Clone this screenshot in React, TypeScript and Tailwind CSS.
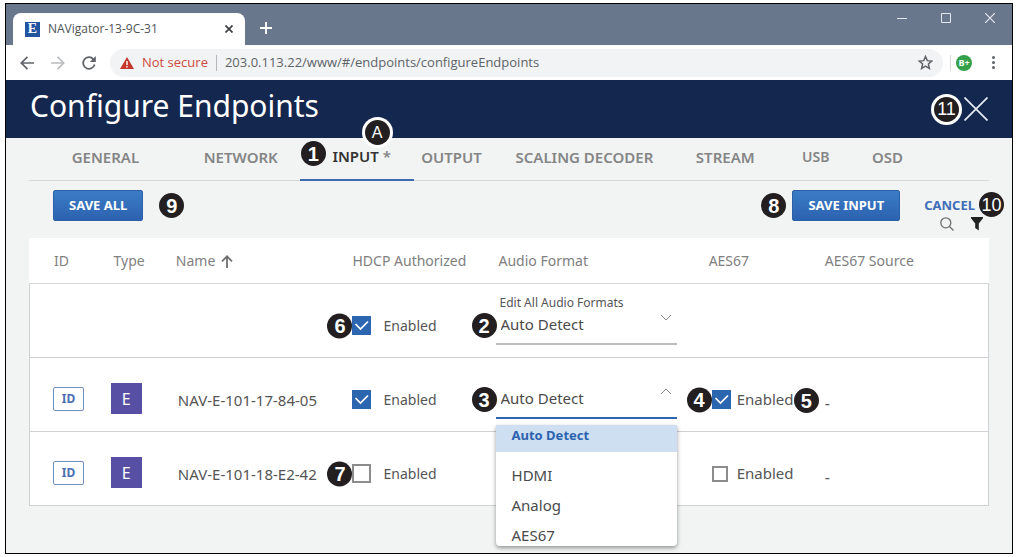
import { useState } from "react";
import type { ReactNode } from "react";
import clsx from "clsx";

const tabs = ["GENERAL", "NETWORK", "INPUT", "OUTPUT", "SCALING DECODER", "STREAM", "USB", "OSD"];

const formats = ["Auto Detect", "HDMI", "Analog", "AES67"];

const endpoints = [
  { name: "NAV-E-101-17-84-05", hdcp: true, aes67: true, open: true, marks: { audio: "3", aes67: "4", source: "5" } },
  { name: "NAV-E-101-18-E2-42", hdcp: false, aes67: false, open: false, marks: { hdcp: "7" } },
] as {
  name: string;
  hdcp: boolean;
  aes67: boolean;
  open: boolean;
  marks: { hdcp?: string; audio?: string; aes67?: string; source?: string };
}[];

// Numbered marker that points at a part of the screen
function Callout({ children, className, size = "text-xl font-bold" }: { children: ReactNode; className?: string; size?: string }) {
  return (
    <span
      className={clsx(
        "z-10 flex size-[25px] shrink-0 items-center justify-center rounded-full bg-[#231f20] font-['Liberation_Sans',sans-serif] leading-none text-white",
        size,
        className,
      )}
    >
      {children}
    </span>
  );
}

function Check({ id, initial, mark, large }: { id: string; initial: boolean; mark?: string; large?: boolean }) {
  const [checked, setChecked] = useState(initial);
  return (
    <div className={clsx("relative flex items-center", large ? "gap-[6px] text-[15px]" : "gap-3 text-sm")}>
      {mark && <Callout className="absolute right-full top-1/2 -translate-y-1/2">{mark}</Callout>}
      <span className="relative flex">
        <input
          id={id}
          type="checkbox"
          checked={checked}
          onChange={() => setChecked(!checked)}
          className={clsx(
            "appearance-none border-2 border-[#8c8c8c] bg-white checked:border-[#2c66b1] checked:bg-[#2c66b1]",
            large && !checked ? "mr-[3px] size-4" : "size-[19px]",
          )}
        />
        {checked && (
          <svg viewBox="0 0 19 19" className="pointer-events-none absolute inset-0 size-[19px]" fill="none" stroke="white" strokeWidth="1.7">
            <path d="M3.500 8l5 5L16 5.500" />
          </svg>
        )}
      </span>
      <label htmlFor={id}>Enabled</label>
    </div>
  );
}

function FormatSelect({ id, caption, mark, open }: { id: string; caption?: string; mark: string; open?: boolean }) {
  const [value, setValue] = useState(formats[0]);
  return (
    <div className="relative w-[181px]">
      {caption && (
        <label htmlFor={id} className="block pl-1 text-xs leading-3 text-[#555]">
          {caption}
        </label>
      )}
      <div className="relative">
        <Callout className="absolute -left-6 top-1">{mark}</Callout>
        <select
          id={id}
          aria-label={caption ? undefined : "Audio Format"}
          value={value}
          onChange={(e) => setValue(e.target.value)}
          className={clsx(
            "block h-9 w-full appearance-none border-b-2 bg-transparent pb-1 pl-[5px] text-[15px] text-[#4a4a4a] outline-none",
            open ? "border-[#2c66b1]" : "border-[#bdbdbd]",
          )}
        >
          {formats.map((f) => (
            <option key={f}>{f}</option>
          ))}
        </select>
        <svg viewBox="0 0 12 7" className="pointer-events-none absolute right-[5px] top-[5px] h-[7px] w-3" fill="none" stroke="#8a8a8a">
          {open ? <path d="M1 6l5-5 5 5" /> : <path d="M1 1l5 5 5-5" />}
        </svg>
      </div>
      {open && (
        <ul
          role="listbox"
          aria-label="Audio Format"
          className="absolute inset-x-0 top-full z-20 mt-[6px] max-h-[121px] overflow-hidden rounded-b bg-white text-[15px] text-[#4a4a4a] shadow-[0_2px_4px_rgba(0,0,0,0.4)]"
        >
          {formats.map((f) => (
            <li
              key={f}
              role="option"
              aria-selected={f === value}
              onClick={() => setValue(f)}
              className={clsx(
                "pl-4",
                f === value ? "mb-2 h-[27px] bg-[#cddff1] text-[13px] font-bold leading-5 text-[#2c62ae]" : "leading-[30px]",
              )}
            >
              {f}
            </li>
          ))}
        </ul>
      )}
    </div>
  );
}

function BrowserBar() {
  return (
    <div className="font-['Open_Sans',sans-serif]">
      <div className="flex h-[41px] items-end bg-[#69778c] pl-[7px]">
        <div className="flex h-8 w-[232px] items-center rounded-t-lg bg-white pl-3 pr-3">
          <span className="flex size-[15px] items-center justify-center bg-[#2354a0] font-['Liberation_Serif',serif] text-sm font-bold leading-none text-white">
            E
          </span>
          <span className="ml-2 flex-1 text-xs text-[#505357]">NAVigator-13-9C-31</span>
          <button aria-label="Close tab">
            <svg viewBox="0 0 8 8" className="size-2" stroke="#3c4043" strokeWidth="1.7">
              <path d="M.5.5l7 7M7.500.5l-7 7" />
            </svg>
          </button>
        </div>
        <button aria-label="New tab" className="mb-[11px] ml-[15px]">
          <svg viewBox="0 0 12 12" className="size-3" stroke="white" strokeWidth="1.8">
            <path d="M6 0v12M0 6h12" />
          </svg>
        </button>
        <div className="ml-auto flex h-[27px] self-start">
          <button aria-label="Minimize" className="flex w-11 items-center justify-center">
            <svg viewBox="0 0 10 10" className="size-[10px]" stroke="#e4e9f0">
              <path d="M0 5.500h10" />
            </svg>
          </button>
          <button aria-label="Maximize" className="flex w-11 items-center justify-center">
            <svg viewBox="0 0 10 10" className="size-[10px]" stroke="#e4e9f0" fill="none">
              <path d="M.5.5h9v9h-9z" />
            </svg>
          </button>
          <button aria-label="Close window" className="flex w-11 items-center justify-center">
            <svg viewBox="0 0 10 10" className="size-[10px]" stroke="#e4e9f0" strokeWidth="1.2">
              <path d="M0 0l10 10M10 0L0 10" />
            </svg>
          </button>
        </div>
      </div>

      <div className="flex h-[35px] items-center bg-white pl-[14px] pr-[17px]">
        <button aria-label="Back">
          <svg viewBox="0 0 14 14" className="size-[14px]" fill="none" stroke="#5f6368" strokeWidth="1.7">
            <path d="M7.500.8L1.300 7l6.200 6.200M1.300 7H14" />
          </svg>
        </button>
        <button aria-label="Forward" className="ml-[17px]">
          <svg viewBox="0 0 14 14" className="size-[14px]" fill="none" stroke="#babcbe" strokeWidth="1.700">
            <path d="M6.500.8L12.700 7l-6.200 6.200M12.700 7H0" />
          </svg>
        </button>
        <button aria-label="Reload" className="ml-[17px]">
          <svg viewBox="0 0 14 14" className="size-[14px]" fill="none" stroke="#5f6368" strokeWidth="1.800">
            <path d="M12.600 8.500A5.800 5.800 0 1 1 11.300 3.100L12.500 4.300" />
            <path d="M13.800 0v6H7.800z" fill="#5f6368" stroke="none" />
          </svg>
        </button>
        <div className="ml-[14px] flex h-7 flex-1 items-center rounded-full bg-[#f1f3f4] pl-[10px] pr-[10px] text-[13px]">
          <svg viewBox="0 0 14 12" className="h-3 w-[14px]">
            <path d="M7 0l7 12H0z" fill="#c5362c" />
            <path d="M7 4v4M7 9v1.500" stroke="white" strokeWidth="1.400" />
          </svg>
          <span className="ml-2 text-[#cf4b41]">Not secure</span>
          <span className="mx-2 h-4 w-px bg-[#b4b7ba]" />
          <input
            aria-label="Address"
            defaultValue="203.0.113.22/www/#/endpoints/configureEndpoints"
            className="min-w-0 flex-1 bg-transparent text-[#5f6368] outline-none"
          />
          <button aria-label="Bookmark this page">
            <svg viewBox="0 0 24 24" className="size-[15px]" fill="none" stroke="#5f6368" strokeWidth="2.400">
              <path d="M12 2.500l2.900 6.500 7.100.7-5.400 4.700 1.600 7-6.200-3.700-6.200 3.700 1.600-7L2 9.700l7.100-.7z" />
            </svg>
          </button>
        </div>
        <span className="ml-[7px] h-4 w-px bg-[#d5d8db]" />
        <button className="ml-[5px] flex size-4 items-center justify-center rounded-full bg-[#35a04a] text-[9px] font-bold leading-none text-white">
          B+
        </button>
        <button aria-label="Menu" className="ml-5">
          <svg viewBox="0 0 3 13" className="h-[13px] w-[3px]" fill="#5f6368">
            <circle cx="1.500" cy="1.500" r="1.500" />
            <circle cx="1.500" cy="6.500" r="1.500" />
            <circle cx="1.500" cy="11.500" r="1.500" />
          </svg>
        </button>
      </div>
    </div>
  );
}

function Tabs() {
  return (
    <nav className="mx-[23px] grid h-[43px] grid-cols-[153fr_118fr_114fr_76fr_190fr_92fr_89fr_55fr_74fr] border-b border-[#d5d9db] text-[15px] font-semibold text-[#858585]">
      {tabs.map((tab) =>
        tab === "INPUT" ? (
          <button key={tab} className="relative -mb-px whitespace-nowrap border-b-2 border-[#3c6bb0] pb-1 pl-[10px]">
            <Callout className="absolute left-px top-[3px]">1</Callout>
            <Callout size="text-base font-medium" className="absolute -top-[18px] left-[65px] ring-[3px] ring-white">
              A
            </Callout>
            <span className="text-[#333]">{tab}</span> *
          </button>
        ) : (
          <button key={tab} className={clsx("whitespace-nowrap pb-1", tab === "USB" && "text-sm")}>
            {tab}
          </button>
        ),
      )}
    </nav>
  );
}

const primaryButton =
  "h-[31px] rounded-[2px] border border-[#2a61a8] bg-linear-to-b from-[#3b7cc5] to-[#2c62b0] px-[15px] font-bold text-white";

function Actions() {
  return (
    <div className="flex h-[57px] items-start pl-[47px] pr-2 pt-[9px] text-[13px]">
      <button className={primaryButton}>SAVE ALL</button>
      <Callout className="ml-4 mt-[3px]">9</Callout>
      <Callout className="ml-auto mt-[3px]">8</Callout>
      <button className={clsx(primaryButton, "ml-[6px]")}>SAVE INPUT</button>
      <div className="ml-6 flex flex-col">
        <div className="flex h-[27px] items-end gap-1">
          <button className="pb-[2px] font-bold text-[#3f6db8]">CANCEL</button>
          <Callout size="text-lg font-medium">10</Callout>
        </div>
        <div className="flex justify-end gap-4 pr-5">
          <button aria-label="Search">
            <svg viewBox="0 0 14 14" className="size-[14px]" fill="none" stroke="#6d6d6d" strokeWidth="1.300">
              <circle cx="5.800" cy="5.800" r="5" />
              <path d="M9.500 9.500l4 4" />
            </svg>
          </button>
          <button aria-label="Filter">
            <svg viewBox="0 0 14 14" className="size-[14px]" fill="#222">
              <path d="M1 0h12v1.200L8.800 6.500V13.500L5.200 11V6.500L1 1.200z" />
            </svg>
          </button>
        </div>
      </div>
    </div>
  );
}

function EndpointTable() {
  return (
    <div className="mx-[23px]">
      <table className="w-full table-fixed border-separate border-spacing-0 bg-white text-left text-[#555] [&_td]:border-b [&_td]:border-[#cfd2d4] [&_td]:p-0 [&_td:first-child]:border-l [&_td:last-child]:border-r">
        <colgroup>
          <col className="w-[8.5%]" />
          <col className="w-[6.8%]" />
          <col className="w-[18.4%]" />
          <col className="w-[14.9%]" />
          <col className="w-[22.2%]" />
          <col className="w-[12.1%]" />
          <col />
        </colgroup>
        <thead>
          <tr className="h-[46px] text-sm text-[#808080] [&>th]:border-b [&>th]:border-[#d5d8da] [&>th]:p-0 [&>th]:pt-px [&>th]:font-normal">
            <th>
              <span className="pl-[25px]">ID</span>
            </th>
            <th>
              <span className="pl-[3px]">Type</span>
            </th>
            <th>
              <button className="flex items-center gap-[6px]">
                Name
                <svg viewBox="0 0 12 13" className="h-[13px] w-3" fill="none" stroke="#6f6f6f" strokeWidth="1.800">
                  <path d="M6 13V1.500M1 6.300l5-5 5 5" />
                </svg>
              </button>
            </th>
            <th>HDCP Authorized</th>
            <th>
              <span className="pl-[3px]">Audio Format</span>
            </th>
            <th>AES67</th>
            <th>AES67 Source</th>
          </tr>
        </thead>
        <tbody>
          <tr className="h-[74px]">
            <td />
            <td />
            <td />
            <td>
              <div className="pt-[10px]">
                <Check id="hdcp-all" initial mark="6" />
              </div>
            </td>
            <td className="align-bottom">
              <div className="pb-3">
                <FormatSelect id="format-all" caption="Edit All Audio Formats" mark="2" />
              </div>
            </td>
            <td />
            <td />
          </tr>
          {endpoints.map((e) => (
            <tr key={e.name} className="h-[74px]">
              <td>
                <div className="pl-[23px] pt-2">
                  <button className="block h-6 w-[31px] rounded-[2px] border border-[#6f8fc4] text-xs font-bold leading-none text-[#4a70b3]">
                    ID
                  </button>
                </div>
              </td>
              <td>
                <div className="pt-2">
                  <span className="flex size-[31px] items-center justify-center bg-[#574fa3] text-base text-white">E</span>
                </div>
              </td>
              <td>
                <div className="whitespace-nowrap pl-[2px] pt-3 text-[15px]">{e.name}</div>
              </td>
              <td>
                <div className="pt-[10px]">
                  <Check id={`hdcp-${e.name}`} initial={e.hdcp} mark={e.marks.hdcp} />
                </div>
              </td>
              <td className="align-bottom">
                {e.open && (
                  <div className="pb-3">
                    <FormatSelect id={`format-${e.name}`} mark={e.marks.audio ?? ""} open />
                  </div>
                )}
              </td>
              <td>
                <div className="relative pl-[3px] pt-[10px]">
                  <Check id={`aes67-${e.name}`} initial={e.aes67} mark={e.marks.aes67} large />
                  {e.marks.source && <Callout className="absolute right-[6px] top-[10px]">{e.marks.source}</Callout>}
                </div>
              </td>
              <td>
                <div className="pt-4">-</div>
              </td>
            </tr>
          ))}
        </tbody>
      </table>
    </div>
  );
}

export default function App() {
  return (
    <div className="flex min-h-screen flex-col bg-white pb-[3px] pl-[5px] pr-[6px] pt-[3px] font-['Noto_Sans',sans-serif]">
      <main className="flex flex-1 flex-col border border-black bg-[#f2f4f4]">
        <BrowserBar />
        <header className="flex h-[58px] items-center bg-[#14274e] px-6 text-white">
          <h1 className="flex-1 pb-[6px] text-3xl">Configure Endpoints</h1>
          <Callout size="text-lg font-medium" className="ring-[3px] ring-white">
            11
          </Callout>
          <button aria-label="Close" className="ml-[5px]">
            <svg viewBox="0 0 24 24" className="size-6" stroke="#e8edf5" strokeWidth="1.700">
              <path d="M.5.5l23 23M23.500.5l-23 23" />
            </svg>
          </button>
        </header>
        <Tabs />
        <Actions />
        <EndpointTable />
      </main>
    </div>
  );
}
